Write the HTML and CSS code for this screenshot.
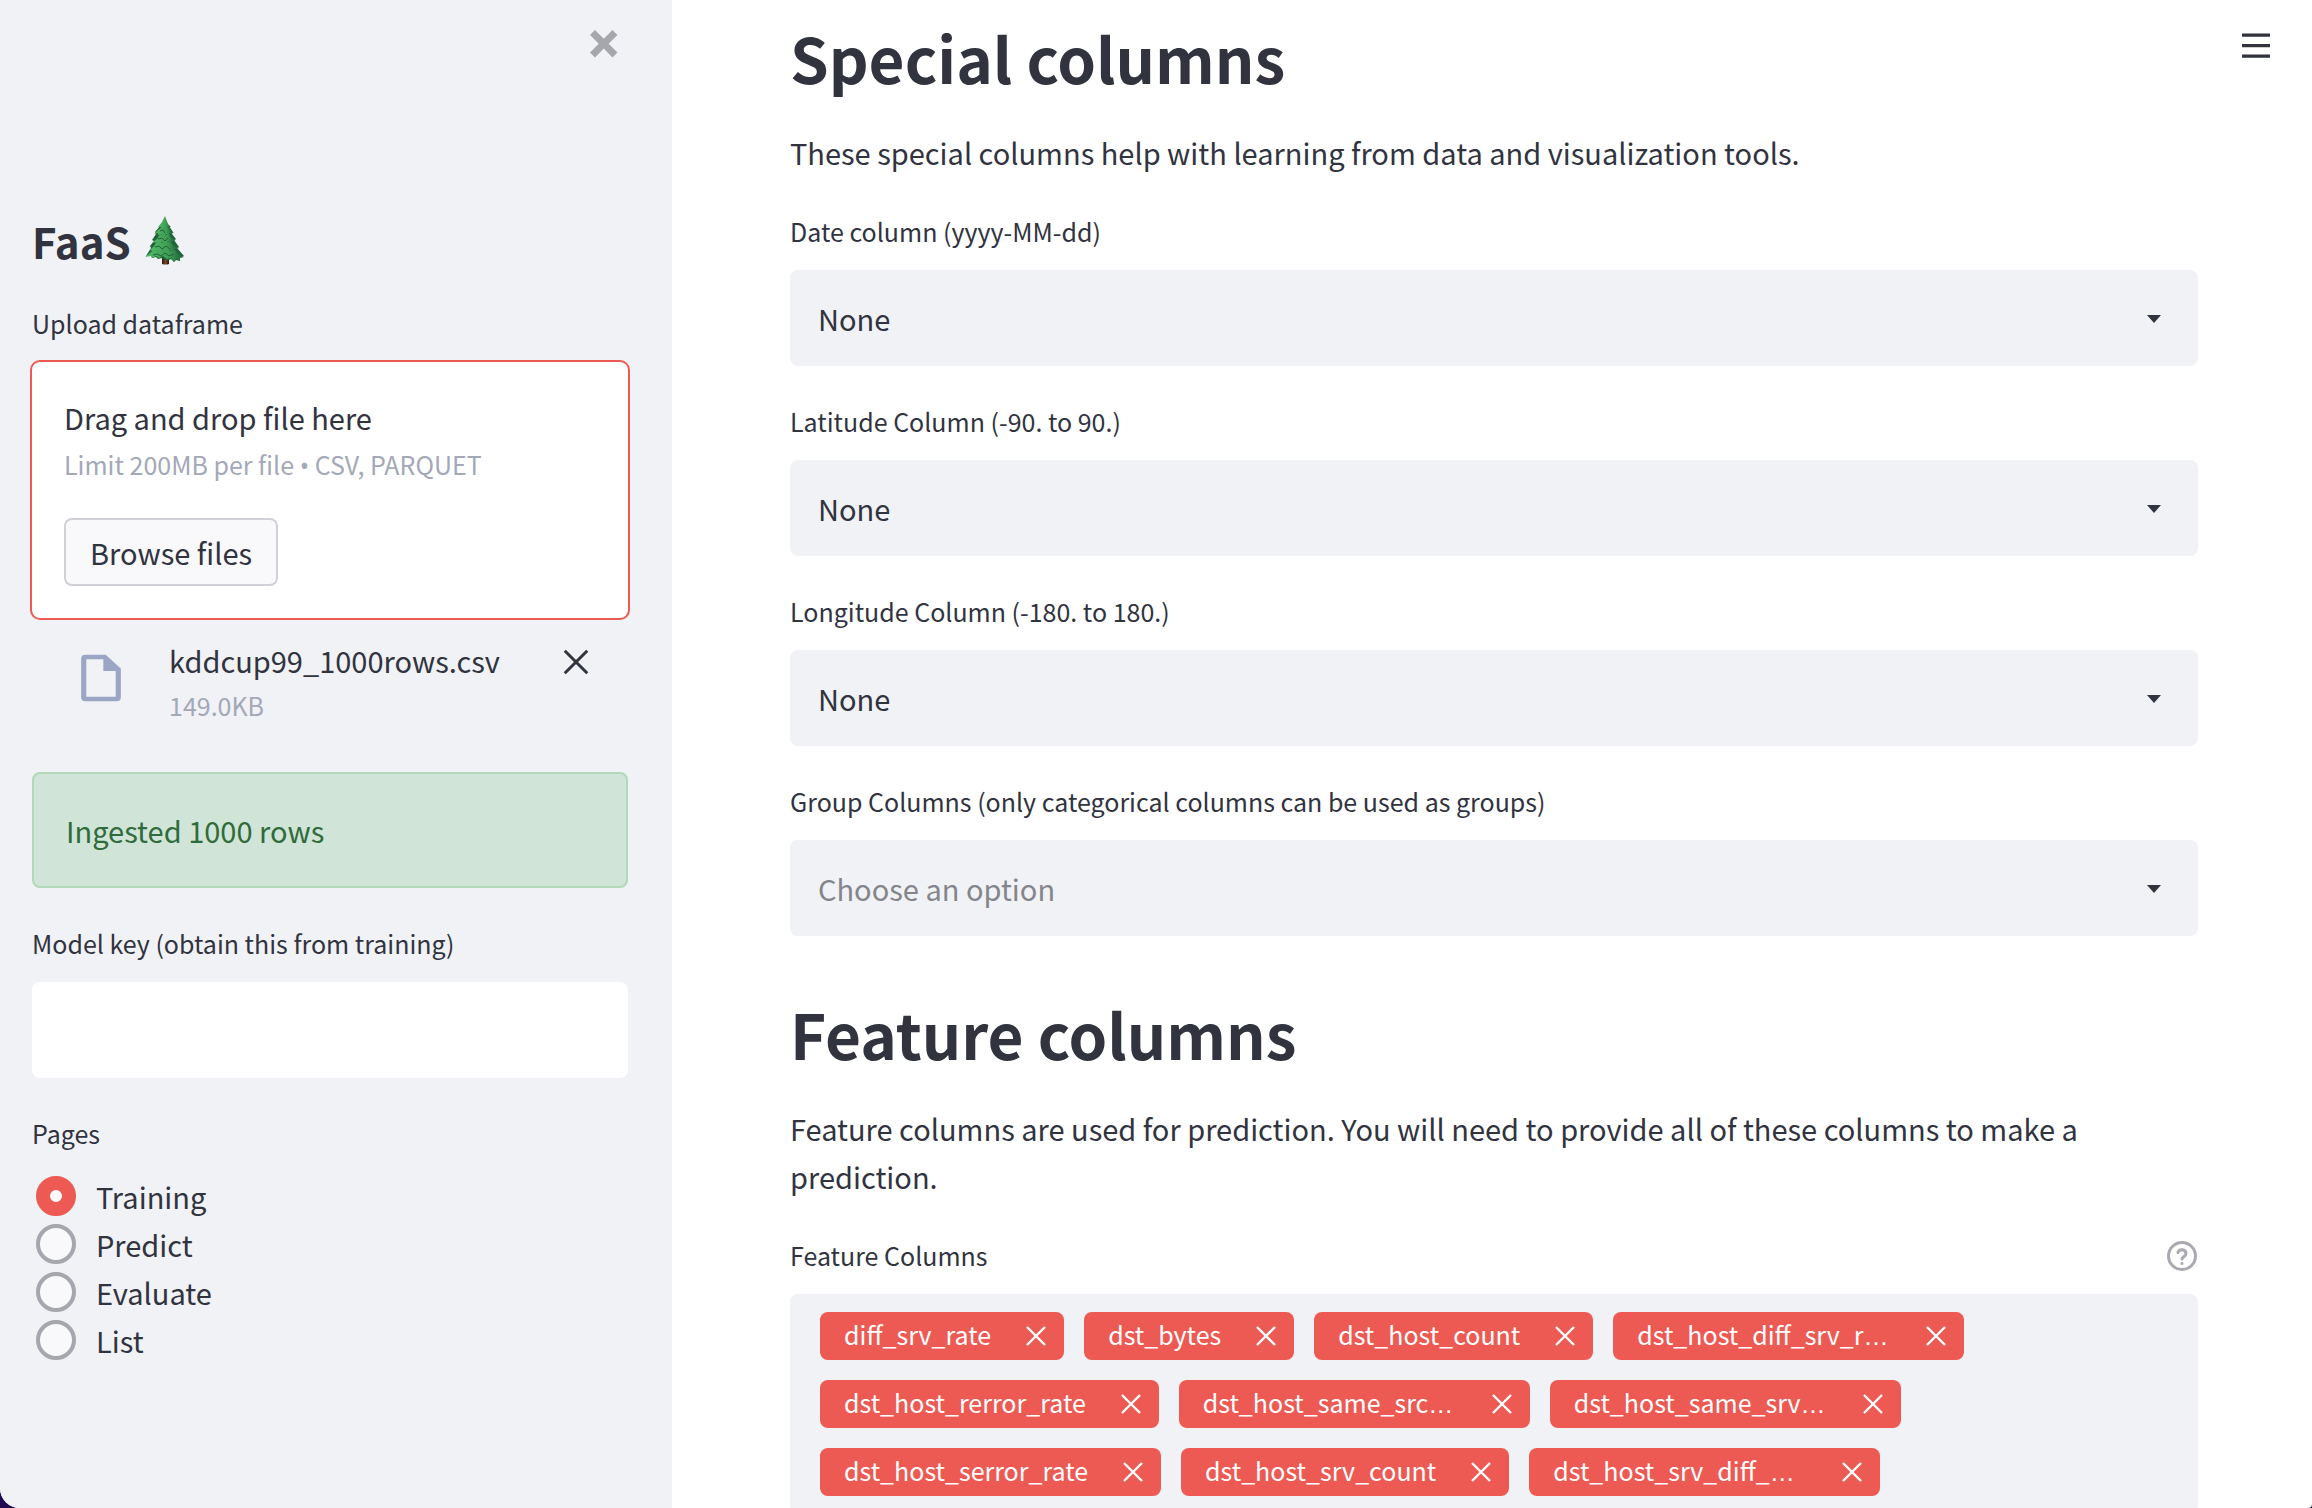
FILE: index.html
```html
<!DOCTYPE html>
<html lang="en">
<head>
<meta charset="utf-8">
<meta name="viewport" content="width=device-width, initial-scale=1">
<title>FaaS</title>
<link rel="stylesheet" href="styles.css">
</head>
<body>
<svg class="sprite" aria-hidden="true">
  <symbol id="cross" viewBox="0 0 24 24"><path d="M3 3l18 18M21 3L3 21" fill="none" stroke="currentColor" stroke-width="2.4"/></symbol>
  <symbol id="caret" viewBox="0 0 14 8"><path d="M0 0h14L7 8z" fill="currentColor"/></symbol>
</svg>
<div class="app">
  <aside class="sidebar">
    <div class="sidebar-top">
      <button class="icon-button sidebar-close" type="button" aria-label="Close sidebar">
        <svg width="28" height="28" viewBox="0 0 8 8"><path fill="currentColor" d="M1.41 0L0 1.41l.72.72L2.5 3.94.72 5.72 0 6.41l1.41 1.44.72-.72 1.81-1.81 1.78 1.81.69.72 1.44-1.44-.72-.69-1.81-1.78 1.81-1.81.72-.72L6.41 0l-.69.72L3.94 2.5 2.13.72z"/></svg>
      </button>
    </div>
    <h2 class="brand">FaaS
      <svg class="tree" width="40" height="50" viewBox="0 0 40 50" aria-hidden="true">
        <defs>
          <linearGradient id="leaf" x1="0" x2="1"><stop offset="0" stop-color="#55b869"/><stop offset=".6" stop-color="#3f9f55"/><stop offset="1" stop-color="#1d5c37"/></linearGradient>
          <linearGradient id="bark" x1="0" y1="0" x2="1" y2="0"><stop offset="0" stop-color="#2a1408"/><stop offset=".5" stop-color="#7a4a22"/><stop offset="1" stop-color="#2a1408"/></linearGradient>
        </defs>
        <path d="M17 39h7v9q-3 1-7 0z" fill="url(#bark)"/>
        <path fill="#1f6438" d="M20 4l8 12-1 2 4 5-2 1 5 7-2 1 7 8-5 1 1 4-4-1-2 2-3-3-4 2-5-3-4 1-2-2-4 1-1-3-5 1 5-8-1-2 4-5-2-1 4-6-1-2z"/>
        <path fill="url(#leaf)" d="M20 0l3 8 3 3-3 0-2 3-2-2-3 2 0-3-3 0 4-5z"/>
        <path fill="url(#leaf)" d="M17 11l3 2 3-2 2 4 4 2-4 0-1 3-3-2-2 3-3-3-3 1 0-2-4 1 4-4z"/>
        <path fill="url(#leaf)" d="M15 18l4 2 5-2 2 4 5 2-4 1-1 3-4-2-2 3-3-3-3 2-2-2-5 1 5-4z"/>
        <path fill="url(#leaf)" d="M12 25l5 2 3-1 6 1 3 3 5 2-4 1-1 3-4-2-3 3-4-3-4 3-2-3-4 1-3-1 4-4z"/>
        <path fill="url(#leaf)" d="M9 33l5 2 5-1 6 1 5-1 3 4 6 3-4 1 0 3-4-2-2 3-3-4-4 1-4-3-4 2-3-2-3 2-2-2-6 1 5-4z"/>
        <path fill="none" stroke="#1c6438" stroke-width="1" d="M15 15l3-1 2 3M13 23l4-1 3 3 3-3M10 31l4-1 3 3 4-3 4 3M8 39l4-1 4 2 4-3 4 3 5-2"/>
      </svg>
    </h2>

    <label class="label label-upload" for="upload">Upload dataframe</label>
    <section class="dropzone">
      <div class="text">Drag and drop file here</div>
      <div class="small muted">Limit 200MB per file <span class="bullet">•</span> CSV, PARQUET</div>
      <button class="browse" id="upload" type="button">Browse files</button>
    </section>
    <div class="file">
      <svg class="file-icon" width="56" height="56" viewBox="0 0 24 24" aria-hidden="true"><path fill="currentColor" fill-rule="evenodd" d="M5.200 2H14L20.500 7.900V20.300Q20.500 22 18.800 22H5.200Q3.500 22 3.500 20.300V3.700Q3.500 2 5.200 2zM5.700 4V20H18.300V9H13V4z"/></svg>
      <div class="file-info">
        <div class="text">kddcup99_1000rows.csv</div>
        <div class="small muted">149.0KB</div>
      </div>
      <button class="icon-button file-remove" type="button" aria-label="Remove file"><svg width="30" height="30"><use href="#cross"/></svg></button>
    </div>

    <div class="alert" role="status">Ingested 1000 rows</div>

    <div class="field">
      <label class="label" for="key">Model key (obtain this from training)</label>
      <input class="control key-input" id="key" type="text">
    </div>

    <fieldset class="pages">
      <legend class="label">Pages</legend>
      <label class="radio"><input type="radio" name="page" checked>Training</label>
      <label class="radio"><input type="radio" name="page">Predict</label>
      <label class="radio"><input type="radio" name="page">Evaluate</label>
      <label class="radio"><input type="radio" name="page">List</label>
    </fieldset>
  </aside>

  <main class="main">
    <button class="icon-button menu" type="button" aria-label="Menu">
      <svg width="28" height="26" viewBox="0 0 28 26"><path fill="currentColor" d="M0 .5h28v3.300H0zM0 11h28v3.300H0zM0 21.500h28v3.300H0z"/></svg>
    </button>
    <h1 class="title">Special columns</h1>
    <p class="text intro">These special columns help with learning from data and visualization tools.</p>
    <div class="field">
      <label class="label" for="date">Date column (yyyy-MM-dd)</label>
      <div class="select"><select class="control" id="date"><option>None</option></select><svg width="14" height="8"><use href="#caret"/></svg></div>
    </div>
    <div class="field">
      <label class="label" for="lat">Latitude Column (-90. to 90.)</label>
      <div class="select"><select class="control" id="lat"><option>None</option></select><svg width="14" height="8"><use href="#caret"/></svg></div>
    </div>
    <div class="field">
      <label class="label" for="lon">Longitude Column (-180. to 180.)</label>
      <div class="select"><select class="control" id="lon"><option>None</option></select><svg width="14" height="8"><use href="#caret"/></svg></div>
    </div>
    <div class="field">
      <label class="label" for="group">Group Columns (only categorical columns can be used as groups)</label>
      <div class="select"><select class="control placeholder" id="group"><option>Choose an option</option></select><svg width="14" height="8"><use href="#caret"/></svg></div>
    </div>

    <h1 class="title title-next">Feature columns</h1>
    <p class="text intro">Feature columns are used for prediction. You will need to provide all of these columns to make a prediction.</p>
    <div class="field">
      <div class="label-row">
        <span class="label" id="features">Feature Columns</span>
        <svg class="help" width="32" height="32" viewBox="0 0 32 32" fill="none" stroke="currentColor" stroke-width="3" stroke-linecap="round" aria-hidden="true"><circle cx="16" cy="16" r="13.500"/><path d="M12 12.500a4.100 4.100 0 0 1 8 1.200c0 2.700-4 3.300-4 5.300M16 23.300v.1"/></svg>
      </div>
      <div class="tags" role="group" aria-labelledby="features">
        <span class="tag"><span class="tag-name">diff_srv_rate</span><button type="button" aria-label="Remove"><svg width="24" height="24"><use href="#cross"/></svg></button></span>
        <span class="tag"><span class="tag-name">dst_bytes</span><button type="button" aria-label="Remove"><svg width="24" height="24"><use href="#cross"/></svg></button></span>
        <span class="tag"><span class="tag-name">dst_host_count</span><button type="button" aria-label="Remove"><svg width="24" height="24"><use href="#cross"/></svg></button></span>
        <span class="tag"><span class="tag-name clipped">dst_host_diff_srv_r<span class="dots">…</span></span><button type="button" aria-label="Remove"><svg width="24" height="24"><use href="#cross"/></svg></button></span>
        <span class="tag"><span class="tag-name">dst_host_rerror_rate</span><button type="button" aria-label="Remove"><svg width="24" height="24"><use href="#cross"/></svg></button></span>
        <span class="tag"><span class="tag-name clipped">dst_host_same_src<span class="dots">…</span></span><button type="button" aria-label="Remove"><svg width="24" height="24"><use href="#cross"/></svg></button></span>
        <span class="tag"><span class="tag-name clipped">dst_host_same_srv<span class="dots">…</span></span><button type="button" aria-label="Remove"><svg width="24" height="24"><use href="#cross"/></svg></button></span>
        <span class="tag"><span class="tag-name">dst_host_serror_rate</span><button type="button" aria-label="Remove"><svg width="24" height="24"><use href="#cross"/></svg></button></span>
        <span class="tag"><span class="tag-name">dst_host_srv_count</span><button type="button" aria-label="Remove"><svg width="24" height="24"><use href="#cross"/></svg></button></span>
        <span class="tag"><span class="tag-name clipped">dst_host_srv_diff_<span class="dots">…</span></span><button type="button" aria-label="Remove"><svg width="24" height="24"><use href="#cross"/></svg></button></span>
      </div>
    </div>
  </main>
</div>
</body>
</html>
```
FILE: styles.css
```css
:root {
  --ink: #31333f;
  --muted: #a3a8b8;
  --panel: #f0f2f6;
  --accent: #ed5a53;
}

* {
  box-sizing: border-box;
}

html {
  background: #1e0b52;
}

body {
  margin: 0;
  color: var(--ink);
  font-family: "Noto Sans CJK SC", "Noto Sans", sans-serif;
  font-size: 29px;
  line-height: 48px;
}

button,
input,
select {
  font: inherit;
  color: inherit;
}

svg {
  display: block;
}

.sprite {
  display: none;
}

.app {
  display: flex;
  height: 100vh;
  overflow: hidden;
  background: #fff;
  border-radius: 0 0 4px 20px;
}

.sidebar {
  flex: none;
  width: 672px;
  padding: 0 44px 0 32px;
  background: var(--panel);
  overflow: hidden;
}

.sidebar-top {
  display: flex;
  justify-content: flex-end;
  height: 211px;
  padding: 30px 10px 0 0;
}

.icon-button {
  display: block;
  padding: 0;
  border: 0;
  background: none;
  align-self: flex-start;
}

.sidebar-close {
  color: #a5a7ad;
}

.brand {
  display: flex;
  align-items: center;
  gap: 14px;
  margin: 0 0 31px;
  font-size: 42px;
  line-height: 60px;
  font-weight: 700;
}

.text {
  margin: 0;
}

.label {
  display: block;
  padding: 0;
  margin-bottom: 18px;
  font-size: 25px;
  line-height: 42px;
}

.label-upload {
  margin-bottom: 16px;
}

.small {
  font-size: 25px;
  line-height: 42px;
}

.muted {
  color: var(--muted);
}

.bullet {
  font-family: "Noto Sans", sans-serif;
}

.dots {
  font-family: "Liberation Sans", sans-serif;
}

.dropzone {
  margin: 0 -2px;
  padding: 31px 32px 32px;
  border: 2px solid var(--accent);
  border-radius: 10px;
  background: #fff;
}

.dropzone .small {
  margin-top: 2px;
}

.browse {
  display: block;
  height: 68px;
  margin-top: 32px;
  padding: 0 24px;
  border: 2px solid #d0d1d6;
  border-radius: 8px;
  background: #f9f9fc;
}

.file {
  display: flex;
  align-items: flex-start;
  padding: 16px 37px 0 41px;
}

.file-icon {
  margin-top: 14px;
  color: #9aa6c3;
}

.file-info {
  flex: 1;
  margin-left: 40px;
}

.file-remove {
  margin-top: 11px;
}

.alert {
  margin: 46px 0 34px;
  padding: 32px;
  border: 2px solid #b1d8b8;
  border-radius: 8px;
  background: #d0e5d7;
  color: #2f6b3b;
}

.field {
  margin-bottom: 34px;
}

.control {
  display: block;
  width: 100%;
  height: 96px;
  padding: 0 28px;
  border: 0;
  border-radius: 8px;
  background: var(--panel);
  appearance: none;
}

.key-input {
  background: #fff;
}

.pages {
  margin: 0;
  padding: 0;
  border: 0;
}

.radio {
  display: flex;
  align-items: center;
  gap: 20px;
}

.radio input {
  width: 40px;
  height: 40px;
  margin: 0 0 0 4px;
  border: 4px solid #a5a6ae;
  border-radius: 50%;
  background: #f9f9fc;
  appearance: none;
}

.radio input:checked {
  border: 14px solid var(--accent);
}

.main {
  position: relative;
  flex: 1;
  min-width: 0;
  padding: 14px 114px 0 118px;
}

.menu {
  position: absolute;
  top: 33px;
  right: 42px;
}

.title {
  margin: 0 0 28px;
  font-size: 62px;
  line-height: 86px;
  font-weight: 700;
}

.title-next {
  margin-top: 54px;
}

.intro {
  margin-bottom: 34px;
}

.select {
  position: relative;
}

.select svg {
  position: absolute;
  top: 45px;
  right: 37px;
  pointer-events: none;
}

.placeholder {
  color: #84858c;
}

.label-row {
  display: flex;
  justify-content: space-between;
}

.help {
  margin-top: 6px;
  color: #a9aab1;
}

.tags {
  display: flex;
  flex-wrap: wrap;
  gap: 20px;
  padding: 18px 30px;
  border-radius: 8px;
  background: var(--panel);
}

.tag {
  display: flex;
  align-items: center;
  height: 48px;
  padding: 0 16px 0 24px;
  border-radius: 8px;
  background: var(--accent);
  color: #fff;
  font-size: 25px;
}

.tag-name {
  height: 48px;
  line-height: 44px;
}

.clipped {
  width: 254px;
}

.tag button {
  margin-left: 33px;
  padding: 0;
  border: 0;
  background: none;
}
```
